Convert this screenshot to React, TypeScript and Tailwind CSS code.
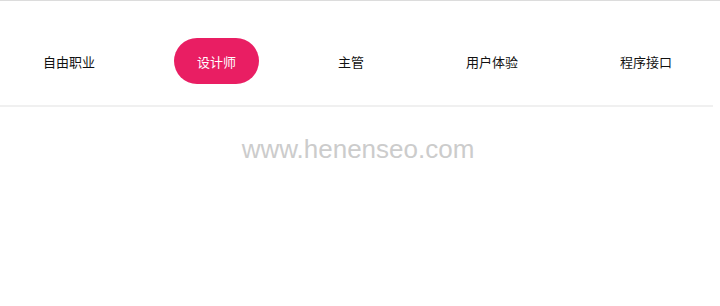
import React from 'react';

const tabs = ['自由职业', '设计师', '主管', '用户体验', '程序接口'];

const App = () => {
  const active = 1;

  return (
    <div className="w-[720px] h-[306px] bg-white border-t border-[#dcdcdc] font-['Noto_Sans_CJK_SC',sans-serif]">
      {/* Tab bar */}
      <nav className="w-[713px] flex items-center justify-between pl-5 pr-[18px] pt-[37px] pb-[21px] border-b-2 border-[#f0f0f0]">
        {tabs.map((t, i) => (
          <button
            key={t}
            className={`h-[46px] px-[23px] rounded-full text-[13px] leading-none ${
              i === active ? 'bg-[#e91e63] text-white' : 'bg-transparent text-[#111]'
            }`}
          >
            {t}
          </button>
        ))}
      </nav>

      {/* Watermark */}
      <p className="w-[716px] mt-[23px] text-center text-[26px] text-[#cccccc] font-['Liberation_Sans',Arial,sans-serif]">
        www.henenseo.com
      </p>
    </div>
  );
};

export default App;
